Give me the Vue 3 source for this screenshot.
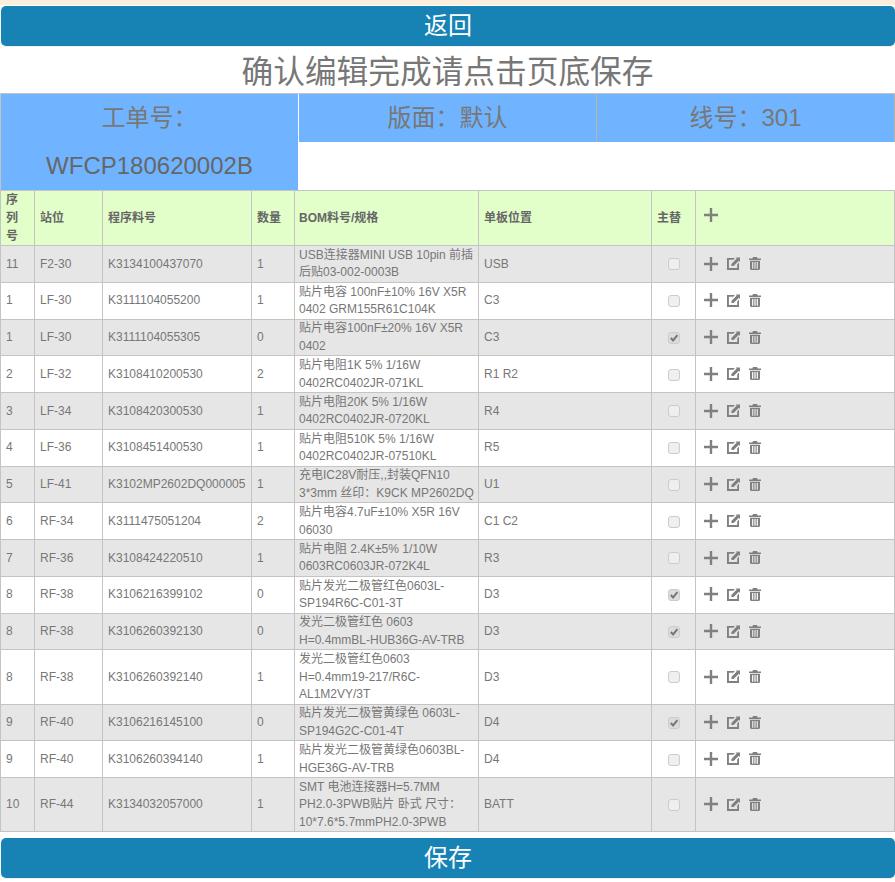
<template>
  <div class="page">
    <button class="btn-main">返回</button>
    <h1 class="title">确认编辑完成请点击页底保存</h1>

    <div class="info-grid">
      <div class="info-cell order-cell">
        <div class="order-label">工单号：</div>
        <div class="order-value">WFCP180620002B</div>
      </div>
      <div class="info-cell">版面：默认</div>
      <div class="info-cell">线号：301</div>
    </div>

    <table class="bom-table">
      <colgroup>
        <col v-for="w in colWidths" :key="w.id" :style="{ width: w.px + 'px' }" />
      </colgroup>
      <thead>
        <tr>
          <th>序列号</th>
          <th>站位</th>
          <th>程序料号</th>
          <th>数量</th>
          <th class="spec">BOM料号/规格</th>
          <th>单板位置</th>
          <th>主替</th>
          <th class="actions">
            <svg class="icon head-add" viewBox="0 0 14 14"><path d="M5.800 0h2.400v5.800H14v2.400H8.200V14H5.800V8.200H0V5.800h5.800z" /></svg>
          </th>
        </tr>
      </thead>
      <tbody>
        <tr v-for="(row, i) in rows" :key="i">
          <td>{{ row.seq }}</td>
          <td>{{ row.station }}</td>
          <td>{{ row.part }}</td>
          <td>{{ row.qty }}</td>
          <td class="spec"><div v-for="line in row.spec" :key="line">{{ line }}</div></td>
          <td>{{ row.pos }}</td>
          <td class="check-cell">
            <span class="check" :class="{ checked: row.main }">
              <svg v-if="row.main" viewBox="0 0 10 10"><path d="M1.800 5l2.300 2.400L8.400 2.200" /></svg>
            </span>
          </td>
          <td class="actions">
            <svg class="icon" viewBox="0 0 14 14"><path d="M5.800 0h2.400v5.800H14v2.400H8.200V14H5.800V8.200H0V5.800h5.800z" /></svg>
            <svg class="icon edit" viewBox="0 0 13 13"><path d="M0 1h8L6.200 2.800H1.900v8.300h8.300V7.400L12 5.600V13H0z" /><path d="M4.400 6.900L9.700 1.600 8.600.6H13v4.400L11.900 3.800 6.600 9.100H4.400z" /></svg>
            <svg class="icon trash" viewBox="0 0 12 13"><path d="M4 0h4l.7 1.500H12v1.500H0V1.500h3.300z" /><path d="M1 3.800h10v8.300l-.9.900H1.900L1 12.100zM3.100 5v6.700h1.200V5zM5.400 5v6.700h1.200V5zM7.700 5v6.700h1.200V5z" fill-rule="evenodd" /></svg>
          </td>
        </tr>
      </tbody>
    </table>

    <button class="btn-main btn-save">保存</button>
  </div>
</template>

<script setup>
const colWidths = [34, 68, 149, 43, 184, 173, 44, 199].map((px, id) => ({ id, px }))

const rows = [
  { seq: '11', station: 'F2-30', part: 'K3134100437070', qty: 1, spec: ['USB连接器MINI USB 10pin 前插', '后贴03-002-0003B'], pos: 'USB', main: false },
  { seq: '1', station: 'LF-30', part: 'K3111104055200', qty: 1, spec: ['贴片电容 100nF±10% 16V X5R', '0402 GRM155R61C104K'], pos: 'C3', main: false },
  { seq: '1', station: 'LF-30', part: 'K3111104055305', qty: 0, spec: ['贴片电容100nF±20% 16V X5R', '0402'], pos: 'C3', main: true },
  { seq: '2', station: 'LF-32', part: 'K3108410200530', qty: 2, spec: ['贴片电阻1K 5% 1/16W', '0402RC0402JR-071KL'], pos: 'R1 R2', main: false },
  { seq: '3', station: 'LF-34', part: 'K3108420300530', qty: 1, spec: ['贴片电阻20K 5% 1/16W', '0402RC0402JR-0720KL'], pos: 'R4', main: false },
  { seq: '4', station: 'LF-36', part: 'K3108451400530', qty: 1, spec: ['贴片电阻510K 5% 1/16W', '0402RC0402JR-07510KL'], pos: 'R5', main: false },
  { seq: '5', station: 'LF-41', part: 'K3102MP2602DQ000005', qty: 1, spec: ['充电IC28V耐压,,封装QFN10', '3*3mm 丝印：K9CK MP2602DQ'], pos: 'U1', main: false },
  { seq: '6', station: 'RF-34', part: 'K3111475051204', qty: 2, spec: ['贴片电容4.7uF±10% X5R 16V', '06030'], pos: 'C1 C2', main: false },
  { seq: '7', station: 'RF-36', part: 'K3108424220510', qty: 1, spec: ['贴片电阻 2.4K±5% 1/10W', '0603RC0603JR-072K4L'], pos: 'R3', main: false },
  { seq: '8', station: 'RF-38', part: 'K3106216399102', qty: 0, spec: ['贴片发光二极管红色0603L-', 'SP194R6C-C01-3T'], pos: 'D3', main: true },
  { seq: '8', station: 'RF-38', part: 'K3106260392130', qty: 0, spec: ['发光二极管红色 0603', 'H=0.4mmBL-HUB36G-AV-TRB'], pos: 'D3', main: true },
  { seq: '8', station: 'RF-38', part: 'K3106260392140', qty: 1, spec: ['发光二极管红色0603', 'H=0.4mm19-217/R6C-', 'AL1M2VY/3T'], pos: 'D3', main: false },
  { seq: '9', station: 'RF-40', part: 'K3106216145100', qty: 0, spec: ['贴片发光二极管黄绿色 0603L-', 'SP194G2C-C01-4T'], pos: 'D4', main: true },
  { seq: '9', station: 'RF-40', part: 'K3106260394140', qty: 1, spec: ['贴片发光二极管黄绿色0603BL-', 'HGE36G-AV-TRB'], pos: 'D4', main: false },
  { seq: '10', station: 'RF-44', part: 'K3134032057000', qty: 1, spec: ['SMT 电池连接器H=5.7MM', 'PH2.0-3PWB贴片 卧式 尺寸：', '10*7.6*5.7mmPH2.0-3PWB'], pos: 'BATT', main: false }
]
</script>

<style>
html, body {
  margin: 0;
  background: #fff;
}
</style>

<style scoped>
.page {
  width: 895px;
  height: 882px;
  overflow: hidden;
  font-family: "Liberation Sans", Arial, "Noto Sans CJK SC", sans-serif;
  color: #777;
  background: linear-gradient(#fbeedc 0, #fbeedc 5px, #fff 5px);
  padding-top: 6px;
  box-sizing: border-box;
}

.btn-main {
  display: block;
  width: 894px;
  height: 40px;
  margin: 0 0 0 1px;
  padding: 0;
  border: 0;
  border-radius: 5px;
  box-shadow: 0 1px 0 #eee;
  background: #1783b5;
  color: #fff;
  font-family: inherit;
  font-size: 24px;
  line-height: 40px;
}

.btn-save {
  margin-top: 6px;
}

.title {
  margin: 0;
  height: 47px;
  font-size: 31.7px;
  font-weight: 400;
  line-height: 52px;
  text-align: center;
  color: #777;
}

.info-grid {
  display: grid;
  grid-template-columns: 299px 298px 298px;
  grid-template-rows: 48px 48px;
  border-top: 1px solid #c4c4c4;
  box-sizing: border-box;
  height: 97px;
}

.info-cell {
  background: #70b4ff;
  font-size: 24px;
  line-height: 48px;
  text-align: center;
  color: #777;
  border-right: 1px solid #b9b4a8;
}

.order-cell {
  grid-row: span 2;
  border-left: 1px solid #c4c4c4;
  border-right: 1px solid #fff;
}

.order-label,
.order-value {
  height: 48px;
}

.order-value {
  color: #666;
}

.bom-table {
  width: 894px;
  table-layout: fixed;
  border-collapse: collapse;
  font-size: 12px;
  line-height: 17.5px;
}

.bom-table th,
.bom-table td {
  border: 1px solid #c4c4c4;
  padding: 0 5px;
  text-align: left;
  vertical-align: middle;
  font-weight: 400;
  color: #777;
}

.bom-table td {
  padding-top: 0.75px;
}

.bom-table th {
  height: 54px;
  line-height: 18px;
  background: #e2ffca;
  font-weight: 700;
  color: #666;
}

.bom-table tbody tr {
  height: 36.75px;
}

.bom-table tbody tr:nth-child(odd) td {
  background: #e6e6e6;
}

.bom-table .spec {
  padding-left: 4px;
  padding-right: 0;
  white-space: nowrap;
}

.bom-table .check-cell {
  text-align: center;
}

.check {
  display: inline-block;
  width: 12px;
  height: 12px;
  box-sizing: border-box;
  border: 1px solid #ccc;
  border-radius: 3px;
  background: #efefef;
  vertical-align: middle;
}

.check.checked {
  background: #dcdcdc;
}

.check svg {
  display: block;
  width: 10px;
  height: 10px;
  fill: none;
  stroke: #777;
  stroke-width: 2;
}

.icon {
  display: inline-block;
  width: 14px;
  height: 14px;
  fill: #808080;
  vertical-align: middle;
}

.head-add {
  margin-bottom: 6px;
}

.bom-table .actions {
  font-size: 0;
  padding-left: 8px;
}

.edit {
  width: 13px;
  height: 13px;
  margin-left: 9px;
}

.trash {
  width: 12px;
  height: 13px;
  margin-left: 9px;
}
</style>
